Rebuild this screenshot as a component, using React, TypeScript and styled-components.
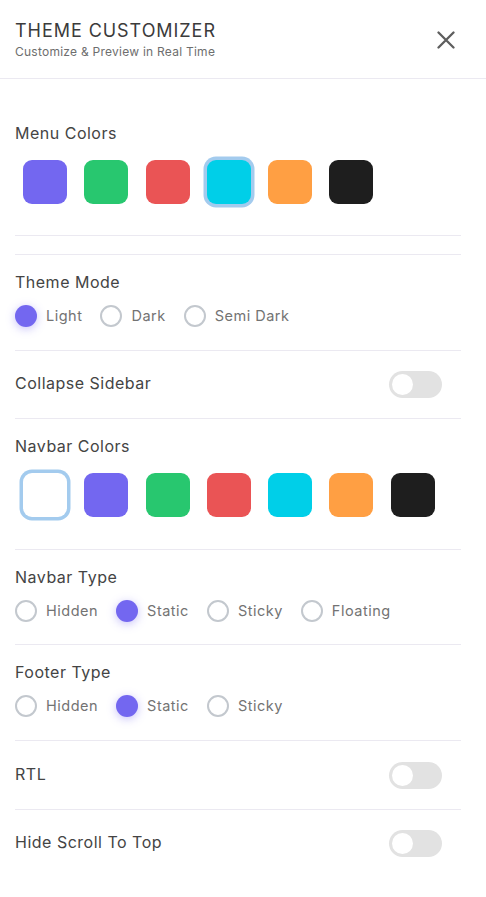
import React, { useState } from "react";
import styled, { createGlobalStyle } from "styled-components";

const GlobalStyle = createGlobalStyle`
  * { box-sizing: border-box; }
  body {
    margin: 0;
    background: #ffffff;
    font-family: Inter, "Open Sans", sans-serif;
  }
`;

const Panel = styled.div`
  width: 486px;
  min-height: 897px;
  background: #ffffff;
`;

const Header = styled.div`
  display: flex;
  justify-content: space-between;
  align-items: center;
  padding: 20px 31px 18px 15px;
  border-bottom: 1px solid #ebe9f1;
`;

const Title = styled.h4`
  margin: 0;
  font-size: 18px;
  line-height: 22px;
  font-weight: 400;
  letter-spacing: 0.95px;
  color: #3b3b3b;
`;

const Subtitle = styled.div`
  margin-top: 2px;
  font-size: 12px;
  line-height: 16px;
  letter-spacing: 0.25px;
  color: #6e6e6e;
`;

const CloseButton = styled.button`
  border: none;
  background: none;
  padding: 0;
  width: 18px;
  height: 18px;
  display: flex;
  cursor: pointer;
`;

const Body = styled.div`
  padding: 0 25px 0 15px;
`;

const Section = styled.div<{ $top?: number; $bottom?: number }>`
  padding: ${(p) => p.$top ?? 17}px 0 ${(p) => p.$bottom ?? 23}px;
  border-bottom: 1px solid #ebe9f1;

  &:last-child {
    border-bottom: none;
  }
`;

const Spacer = styled.div`
  height: 19px;
  border-bottom: 1px solid #ebe9f1;
`;

const Label = styled.div`
  font-size: 16px;
  line-height: 20px;
  letter-spacing: 0.5px;
  color: #444444;
`;

const SwitchLabel = styled(Label)`
  margin-bottom: 3px;
`;

const SwatchRow = styled.div`
  display: flex;
  gap: 17.3px;
  margin-top: 17px;
  padding-left: 8px;
`;

const Swatch = styled.button<{ $color: string; $active?: boolean }>`
  width: 44px;
  height: 44px;
  border-radius: 9px;
  border: none;
  padding: 0;
  cursor: pointer;
  background: ${(p) => p.$color};
  box-shadow: ${(p) => (p.$active ? "0 0 0 3.5px #a3cbee" : "none")};
`;

const RadioGroup = styled.div`
  display: flex;
  align-items: center;
  margin-top: 13px;
`;

const RadioOption = styled.label`
  display: flex;
  align-items: center;
  margin-right: 18px;
  cursor: pointer;
`;

const RadioDot = styled.span<{ $checked?: boolean }>`
  width: 22px;
  height: 22px;
  border-radius: 50%;
  border: ${(p) => (p.$checked ? "none" : "2px solid #c3c8ce")};
  background: ${(p) => (p.$checked ? "#7367f0" : "#ffffff")};
  box-shadow: ${(p) => (p.$checked ? "0 2px 10px 0 rgba(115, 103, 240, 0.4)" : "none")};
`;

const RadioText = styled.span`
  margin-left: 9px;
  font-size: 14.5px;
  line-height: 20px;
  letter-spacing: 0.5px;
  color: #737373;
`;

const SwitchRow = styled.div<{ $top?: number }>`
  display: flex;
  justify-content: space-between;
  align-items: center;
  padding: ${(p) => p.$top ?? 20}px 19px 20px 0;
  border-bottom: 1px solid #ebe9f1;

  &:last-child {
    border-bottom: none;
  }
`;

const SwitchTrack = styled.button<{ $on?: boolean }>`
  position: relative;
  width: 53px;
  height: 27px;
  border: none;
  border-radius: 14px;
  padding: 0;
  cursor: pointer;
  background: ${(p) => (p.$on ? "#7367f0" : "#e2e2e2")};
`;

const SwitchKnob = styled.span<{ $on?: boolean }>`
  position: absolute;
  top: 3px;
  left: ${(p) => (p.$on ? "29px" : "3px")};
  width: 21px;
  height: 21px;
  border-radius: 50%;
  background: #ffffff;
`;

const colors = ["#7367f0", "#28c76f", "#ea5455", "#00cfe8", "#ff9f43", "#1e1e1e"];

const Radios: React.FC<{ options: string[]; value: string; onChange: (v: string) => void }> = ({
  options,
  value,
  onChange,
}) => (
  <RadioGroup>
    {options.map((o) => (
      <RadioOption key={o} onClick={() => onChange(o)}>
        <RadioDot $checked={o === value} />
        <RadioText>{o}</RadioText>
      </RadioOption>
    ))}
  </RadioGroup>
);

const Toggle: React.FC<{ label: string; top?: number }> = ({ label, top }) => {
  const [on, setOn] = useState(false);
  return (
    <SwitchRow $top={top}>
      <SwitchLabel>{label}</SwitchLabel>
      <SwitchTrack $on={on} onClick={() => setOn(!on)}>
        <SwitchKnob $on={on} />
      </SwitchTrack>
    </SwitchRow>
  );
};

export default function App() {
  const [menuColor, setMenuColor] = useState("#00cfe8");
  const [navColor, setNavColor] = useState("#ffffff");
  const [mode, setMode] = useState("Light");
  const [navType, setNavType] = useState("Static");
  const [footerType, setFooterType] = useState("Static");

  return (
    <Panel>
      <GlobalStyle />
      <Header>
        <div>
          <Title>THEME CUSTOMIZER</Title>
          <Subtitle>Customize &amp; Preview in Real Time</Subtitle>
        </div>
        <CloseButton aria-label="Close">
          <svg width="18" height="18" viewBox="0 0 18 18">
            <path d="M1.5 1.5L16.5 16.5M16.5 1.5L1.5 16.5" stroke="#5e5e5e" strokeWidth="2.3" strokeLinecap="round" />
          </svg>
        </CloseButton>
      </Header>

      <Body>
        <Section $top={44} $bottom={31}>
          <Label>Menu Colors</Label>
          <SwatchRow>
            {colors.map((c) => (
              <Swatch key={c} $color={c} $active={c === menuColor} onClick={() => setMenuColor(c)} />
            ))}
          </SwatchRow>
        </Section>
        <Spacer />

        <Section>
          <Label>Theme Mode</Label>
          <Radios options={["Light", "Dark", "Semi Dark"]} value={mode} onChange={setMode} />
        </Section>

        <Toggle label="Collapse Sidebar" />

        <Section $bottom={32}>
          <Label>Navbar Colors</Label>
          <SwatchRow>
            {["#ffffff", ...colors].map((c) => (
              <Swatch key={c} $color={c} $active={c === navColor} onClick={() => setNavColor(c)} />
            ))}
          </SwatchRow>
        </Section>

        <Section $bottom={22}>
          <Label>Navbar Type</Label>
          <Radios options={["Hidden", "Static", "Sticky", "Floating"]} value={navType} onChange={setNavType} />
        </Section>

        <Section>
          <Label>Footer Type</Label>
          <Radios options={["Hidden", "Static", "Sticky"]} value={footerType} onChange={setFooterType} />
        </Section>

        <Toggle label="RTL" top={21} />
        <Toggle label="Hide Scroll To Top" />
      </Body>
    </Panel>
  );
}
